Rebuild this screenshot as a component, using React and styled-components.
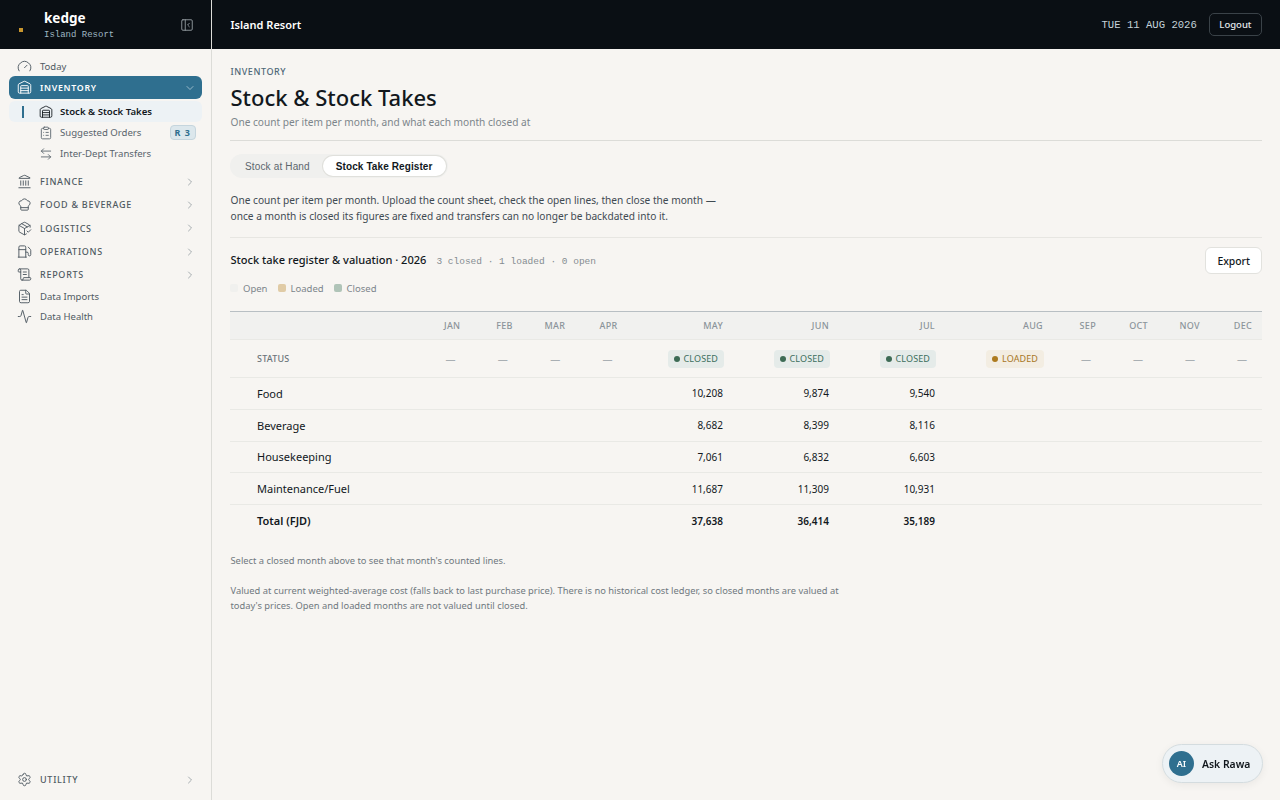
import React from 'react';
import styled, { createGlobalStyle } from 'styled-components';
import {
  Activity,
  ArrowLeftRight,
  ChefHat,
  ChevronDown,
  ChevronRight,
  ClipboardList,
  FileText,
  Fuel,
  Gauge,
  Landmark,
  PackageCheck,
  PanelLeftClose,
  ScrollText,
  Settings,
  Warehouse
} from 'lucide-react';

const SANS = '"Noto Sans", sans-serif';
const ARIAL = '"Liberation Sans", sans-serif';
const MONO = '"Liberation Mono", monospace';
const INK = '#12181d';
const DARK = '#0a0f14';
const BLUE = '#2f6f8f';
const LINE = '#dcdcd8';

const GlobalStyle = createGlobalStyle`
  html, body {
    margin: 0;
    height: 100%;
    background: #f7f5f2;
    font-family: ${SANS};
    color: ${INK};
  }
  #root { height: 100%; }
  * { box-sizing: border-box; }
`;

const Shell = styled.div`
  display: flex;
  height: 800px;
  overflow: hidden;
`;

const Sidebar = styled.aside`
  width: 212px;
  flex: none;
  display: flex;
  flex-direction: column;
  border-right: 1px solid ${LINE};
`;

const Brand = styled.div`
  height: 49px;
  flex: none;
  background: ${DARK};
  display: flex;
  align-items: center;
  padding: 0 17px 0 19px;
`;

const BrandMark = styled.span`
  width: 4px;
  height: 4px;
  background: #c8962e;
  margin-top: 11px;
  margin-right: 21px;
`;

const BrandText = styled.div`
  flex: 1;
  display: flex;
  flex-direction: column;
`;

const BrandName = styled.div`
  font: 700 13.5px/18px ${SANS};
  color: #fff;
`;

const BrandSub = styled.div`
  font: 400 9px/12px ${MONO};
  color: #9fb6c2;
  margin-top: 2px;
`;

const CollapseButton = styled.span`
  display: flex;
  color: #9aa2a8;
`;

const Nav = styled.nav`
  flex: 1;
  display: flex;
  flex-direction: column;
  padding: 7px 9px 0;
`;

const Row = styled.div`
  display: flex;
  align-items: center;
  gap: 8px;
  height: ${(p) => p.$h || 23}px;
  padding: 0 6px 0 8px;
  color: #4f5a62;
  svg { flex: none; }
`;

const PlainLabel = styled.span`
  font-size: 9.5px;
  flex: 1;
`;

const SectionRow = styled(Row)`
  background: ${(p) => (p.$open ? BLUE : 'transparent')};
  color: ${(p) => (p.$open ? '#fff' : '#4f5a62')};
  border-radius: 6px;
`;

const SectionLabel = styled.span`
  flex: 1;
  font-size: ${(p) => (p.$open ? 8.8 : 9)}px;
  font-weight: ${(p) => (p.$open ? 600 : 500)};
  letter-spacing: 0.72px;
`;

const SectionChevron = styled(ChevronRight)`
  color: #8b949a;
`;

const SubRow = styled.div`
  display: flex;
  align-items: center;
  height: 21px;
  margin-top: ${(p) => (p.$first ? 2 : 0)}px;
  padding: 0 9px 0 13px;
  border-radius: 6px;
  background: ${(p) => (p.$active ? '#edf2f5' : 'transparent')};
  color: ${(p) => (p.$active ? INK : '#59646c')};
  font-size: 9.6px;
  font-weight: ${(p) => (p.$active ? 600 : 400)};
`;

const SubMarker = styled.span`
  width: 2px;
  height: 12px;
  margin-right: 15px;
  background: ${(p) => (p.$active ? BLUE : 'transparent')};
`;

const SubLabel = styled.span`
  flex: 1;
  margin-left: 7px;
`;

const CountBadge = styled.span`
  font: 700 9px/13px ${SANS};
  letter-spacing: 1px;
  color: ${BLUE};
  background: #dce7ec;
  border: 1px solid #c5d5dd;
  border-radius: 4px;
  padding: 0 4px;
  height: 15px;
  margin-right: -3px;
`;

const NavGap = styled.div`
  height: 6px;
  flex: none;
`;

const NavSpacer = styled.div`
  flex: 1;
`;

const UtilityWrap = styled.div`
  padding-bottom: 9px;
`;

const Main = styled.div`
  flex: 1;
  min-width: 0;
  display: flex;
  flex-direction: column;
`;

const TopBar = styled.header`
  height: 49px;
  flex: none;
  background: ${DARK};
  display: flex;
  align-items: center;
  justify-content: space-between;
  padding: 0 18px;
`;

const TopTitle = styled.div`
  font: 600 11px/16px ${SANS};
  color: #fff;
  padding-left: 0.5px;
`;

const TopRight = styled.div`
  display: flex;
  align-items: center;
  gap: 12px;
`;

const DateText = styled.span`
  font: 400 10.6px/14px ${MONO};
  color: #c4d2da;
`;

const LogoutButton = styled.span`
  height: 23px;
  padding: 0 9.5px;
  display: flex;
  align-items: center;
  border: 1px solid #3a4248;
  border-radius: 5px;
  font: 500 9.5px ${SANS};
  color: #e6eaec;
`;

const Content = styled.main`
  flex: 1;
  padding: 17px 18px 0;
`;

const Eyebrow = styled.div`
  font-size: 9px;
  line-height: 12px;
  font-weight: 500;
  letter-spacing: 0.55px;
  color: #4e6877;
  padding-left: 0.5px;
`;

const Title = styled.h1`
  margin: 4px 0 0;
  font-size: 22px;
  line-height: 30px;
  font-weight: 500;
  color: ${INK};
  padding-left: 0.5px;
`;

const Subtitle = styled.div`
  margin-top: 3px;
  font-size: 10.13px;
  line-height: 14px;
  color: #7c858b;
  padding-left: 0.5px;
`;

const HeaderRule = styled.div`
  height: 1px;
  background: ${LINE};
  margin-top: 11px;
`;

const TabBar = styled.div`
  display: inline-flex;
  margin-top: 13px;
  padding: 2px;
  background: #f0f0ee;
  border-radius: 12px;
`;

const Tab = styled.span`
  height: 20px;
  display: flex;
  align-items: center;
  padding: 0 13px;
  border-radius: 10px;
  font-size: 10px;
  font-family: ${ARIAL};
  font-weight: ${(p) => (p.$active ? 700 : 400)};
  letter-spacing: ${(p) => (p.$active ? 0.1 : 0.15)}px;
  color: ${(p) => (p.$active ? INK : '#5c666d')};
  background: ${(p) => (p.$active ? '#fff' : 'transparent')};
  box-shadow: ${(p) => (p.$active ? '0 0 0 1px #e0e0dc' : 'none')};
`;

const Intro = styled.p`
  margin: 14px 0 0;
  font-size: 10.16px;
  line-height: 16px;
  color: #3f4a52;
  padding-left: 0.5px;
`;

const SoftRule = styled.div`
  height: 1px;
  background: #e7e6e2;
  margin-top: 13px;
`;

const RegisterHead = styled.div`
  display: flex;
  align-items: center;
  justify-content: space-between;
  margin-top: 9px;
`;

const RegisterTitleWrap = styled.div`
  display: flex;
  align-items: baseline;
  gap: 10px;
  padding: 0 0 3px 0.5px;
`;

const RegisterTitle = styled.span`
  font-size: 11.05px;
  font-weight: 500;
  color: ${INK};
`;

const RegisterMeta = styled.span`
  font: 400 9.5px ${MONO};
  color: #858c91;
`;

const ExportButton = styled.span`
  height: 27px;
  padding: 0 11px;
  display: flex;
  align-items: center;
  background: #fff;
  border: 1px solid #e2e2de;
  border-radius: 6px;
  font: 500 10.4px ${SANS};
  color: ${INK};
`;

const Legend = styled.div`
  display: flex;
  gap: 10px;
  margin-top: 7px;
  height: 14px;
  align-items: center;
`;

const LegendItem = styled.span`
  display: flex;
  align-items: center;
  gap: 5px;
  font-size: 9.5px;
  color: #7c858b;
`;

const LegendSwatch = styled.span`
  width: 8px;
  height: 8px;
  border-radius: 2px;
  background: ${(p) => p.$color};
`;

const Table = styled.table`
  width: 1032px;
  margin-top: 16px;
  table-layout: fixed;
  border-collapse: separate;
  border-spacing: 0;
`;

const HeadCell = styled.th`
  height: 29px;
  padding: 0 10px 0 0;
  background: #f1f1ef;
  border-top: 1px solid #b8bfc3;
  border-bottom: 1px solid #e9e9e5;
  text-align: right;
  font-size: 9px;
  font-weight: 500;
  letter-spacing: 0.3px;
  color: #8b949a;
`;

const StatusLabelCell = styled.td`
  height: 38px;
  padding: 0 0 1px 27px;
  border-bottom: 1px solid #e9e9e5;
  font-size: 9px;
  font-weight: 500;
  letter-spacing: 0.2px;
  color: #6b747a;
`;

const StatusCell = styled.td`
  height: 38px;
  padding: 0 ${(p) => (p.$dash ? 15 : 9)}px 0 0;
  border-bottom: 1px solid #e9e9e5;
  text-align: right;
  font-size: 10px;
  color: #a9afb3;
`;

const Pill = styled.span`
  display: inline-flex;
  align-items: center;
  gap: 4px;
  height: 18px;
  padding: 0 6px;
  border-radius: 4px;
  font-size: 9px;
  letter-spacing: 0.1px;
  background: ${(p) => (p.$kind === 'loaded' ? '#f3ede2' : '#e5ebe9')};
  color: ${(p) => (p.$kind === 'loaded' ? '#a8761f' : '#3c6e5c')};
`;

const PillDot = styled.span`
  width: 6px;
  height: 6px;
  border-radius: 50%;
  background: ${(p) => (p.$kind === 'loaded' ? '#ad7a1e' : '#3d6b55')};
`;

const ItemCell = styled.td`
  height: 31.75px;
  padding: 0 0 0 27px;
  border-bottom: ${(p) => (p.$total ? 'none' : '1px solid #e9e9e5')};
  font-size: 11px;
  font-weight: ${(p) => (p.$total ? 600 : 400)};
  color: ${INK};
`;

const ValueCell = styled.td`
  padding: 0 10px 0 0;
  border-bottom: ${(p) => (p.$total ? 'none' : '1px solid #e9e9e5')};
  text-align: right;
  font-size: 10px;
  font-weight: ${(p) => (p.$total ? 600 : 400)};
  color: ${INK};
`;

const Note = styled.p`
  margin: ${(p) => p.$top}px 0 0;
  width: 620px;
  font-size: 9.34px;
  line-height: 15px;
  color: #6f787e;
  padding-left: 0.5px;
`;

const AskButton = styled.div`
  position: fixed;
  right: 17px;
  bottom: 17px;
  height: 39px;
  width: 101px;
  display: flex;
  align-items: center;
  gap: 8px;
  padding-left: 6px;
  background: #edf2f5;
  border: 1px solid #d4dcdf;
  border-radius: 20px;
  box-shadow: 0 2px 8px rgba(0, 0, 0, 0.06);
  font: 600 10.4px ${SANS};
  color: ${INK};
`;

const AskAvatar = styled.span`
  width: 25px;
  height: 25px;
  border-radius: 50%;
  background: ${BLUE};
  color: #fff;
  font-size: 9px;
  display: flex;
  align-items: center;
  justify-content: center;
`;

const COL_WIDTHS = [188, 52.4, 52.4, 52.4, 52.4, 105.4, 106, 106, 108, 53, 52, 52, 52];
const MONTHS = ['JAN', 'FEB', 'MAR', 'APR', 'MAY', 'JUN', 'JUL', 'AUG', 'SEP', 'OCT', 'NOV', 'DEC'];
const STATUS = [null, null, null, null, 'closed', 'closed', 'closed', 'loaded', null, null, null, null];
const ROWS = [
  ['Food', '10,208', '9,874', '9,540'],
  ['Beverage', '8,682', '8,399', '8,116'],
  ['Housekeeping', '7,061', '6,832', '6,603'],
  ['Maintenance/Fuel', '11,687', '11,309', '10,931'],
  ['Total (FJD)', '37,638', '36,414', '35,189']
];
const SECTIONS = [
  ['FINANCE', Landmark],
  ['FOOD & BEVERAGE', ChefHat],
  ['LOGISTICS', PackageCheck],
  ['OPERATIONS', Fuel],
  ['REPORTS', ScrollText]
];

const ICON = { size: 15, strokeWidth: 1.5 };

const renderItemRow = ([name, ...values], index) => {
  const total = index === ROWS.length - 1;
  return (
    <tr key={name}>
      <ItemCell $total={total}>{name}</ItemCell>
      {MONTHS.map((month, m) => (
        <ValueCell key={month} $total={total}>{m >= 4 && m <= 6 ? values[m - 4] : ''}</ValueCell>
      ))}
    </tr>
  );
};

export default function App() {
  return (
    <Shell>
      <GlobalStyle />
      <Sidebar>
        <Brand>
          <BrandMark />
          <BrandText>
            <BrandName>kedge</BrandName>
            <BrandSub>Island Resort</BrandSub>
          </BrandText>
          <CollapseButton><PanelLeftClose size={14} strokeWidth={1.5} /></CollapseButton>
        </Brand>
        <Nav>
          <Row $h={20}>
            <Gauge {...ICON} />
            <PlainLabel>Today</PlainLabel>
          </Row>
          <SectionRow $open>
            <Warehouse {...ICON} />
            <SectionLabel $open>INVENTORY</SectionLabel>
            <ChevronDown size={12} strokeWidth={1.5} color="#b9d0db" />
          </SectionRow>
          <SubRow $active $first>
            <SubMarker $active />
            <Warehouse size={14} strokeWidth={1.5} />
            <SubLabel>Stock &amp; Stock Takes</SubLabel>
          </SubRow>
          <SubRow>
            <SubMarker />
            <ClipboardList size={14} strokeWidth={1.5} />
            <SubLabel>Suggested Orders</SubLabel>
            <CountBadge>R 3</CountBadge>
          </SubRow>
          <SubRow>
            <SubMarker />
            <ArrowLeftRight size={14} strokeWidth={1.5} />
            <SubLabel>Inter-Dept Transfers</SubLabel>
          </SubRow>
          <NavGap />
          {SECTIONS.map(([label, Icon]) => (
            <SectionRow key={label} $h={23.3}>
              <Icon {...ICON} />
              <SectionLabel>{label}</SectionLabel>
              <SectionChevron size={12} strokeWidth={1.5} />
            </SectionRow>
          ))}
          <Row $h={20}>
            <FileText {...ICON} />
            <PlainLabel>Data Imports</PlainLabel>
          </Row>
          <Row $h={20}>
            <Activity {...ICON} />
            <PlainLabel>Data Health</PlainLabel>
          </Row>
          <NavSpacer />
          <UtilityWrap>
            <SectionRow>
              <Settings {...ICON} />
              <SectionLabel>UTILITY</SectionLabel>
              <SectionChevron size={12} strokeWidth={1.5} />
            </SectionRow>
          </UtilityWrap>
        </Nav>
      </Sidebar>
      <Main>
        <TopBar>
          <TopTitle>Island Resort</TopTitle>
          <TopRight>
            <DateText>TUE 11 AUG 2026</DateText>
            <LogoutButton>Logout</LogoutButton>
          </TopRight>
        </TopBar>
        <Content>
          <Eyebrow>INVENTORY</Eyebrow>
          <Title>Stock &amp; Stock Takes</Title>
          <Subtitle>One count per item per month, and what each month closed at</Subtitle>
          <HeaderRule />
          <TabBar>
            <Tab>Stock at Hand</Tab>
            <Tab $active>Stock Take Register</Tab>
          </TabBar>
          <Intro>
            One count per item per month. Upload the count sheet, check the open lines, then close the month —<br />
            once a month is closed its figures are fixed and transfers can no longer be backdated into it.
          </Intro>
          <SoftRule />
          <RegisterHead>
            <RegisterTitleWrap>
              <RegisterTitle>Stock take register &amp; valuation · 2026</RegisterTitle>
              <RegisterMeta>3 closed · 1 loaded · 0 open</RegisterMeta>
            </RegisterTitleWrap>
            <ExportButton>Export</ExportButton>
          </RegisterHead>
          <Legend>
            <LegendItem><LegendSwatch $color="#f0f0ee" />Open</LegendItem>
            <LegendItem><LegendSwatch $color="#e0cba6" />Loaded</LegendItem>
            <LegendItem><LegendSwatch $color="#b0c4b8" />Closed</LegendItem>
          </Legend>
          <Table>
            <colgroup>
              {COL_WIDTHS.map((width, i) => <col key={i} width={width} />)}
            </colgroup>
            <thead>
              <tr>
                <HeadCell />
                {MONTHS.map((month) => <HeadCell key={month}>{month}</HeadCell>)}
              </tr>
            </thead>
            <tbody>
              <tr>
                <StatusLabelCell>STATUS</StatusLabelCell>
                {MONTHS.map((month, i) => (
                  <StatusCell key={month} $dash={!STATUS[i]}>
                    {STATUS[i] ? (
                      <Pill $kind={STATUS[i]}>
                        <PillDot $kind={STATUS[i]} />
                        {STATUS[i].toUpperCase()}
                      </Pill>
                    ) : '—'}
                  </StatusCell>
                ))}
              </tr>
              {ROWS.map(renderItemRow)}
            </tbody>
          </Table>
          <Note $top={16}>Select a closed month above to see that month's counted lines.</Note>
          <Note $top={15}>
            Valued at current weighted-average cost (falls back to last purchase price). There is no historical cost ledger, so closed months are valued at today's prices. Open and loaded months are not valued until closed.
          </Note>
        </Content>
      </Main>
      <AskButton>
        <AskAvatar>AI</AskAvatar>
        Ask Rawa
      </AskButton>
    </Shell>
  );
}
